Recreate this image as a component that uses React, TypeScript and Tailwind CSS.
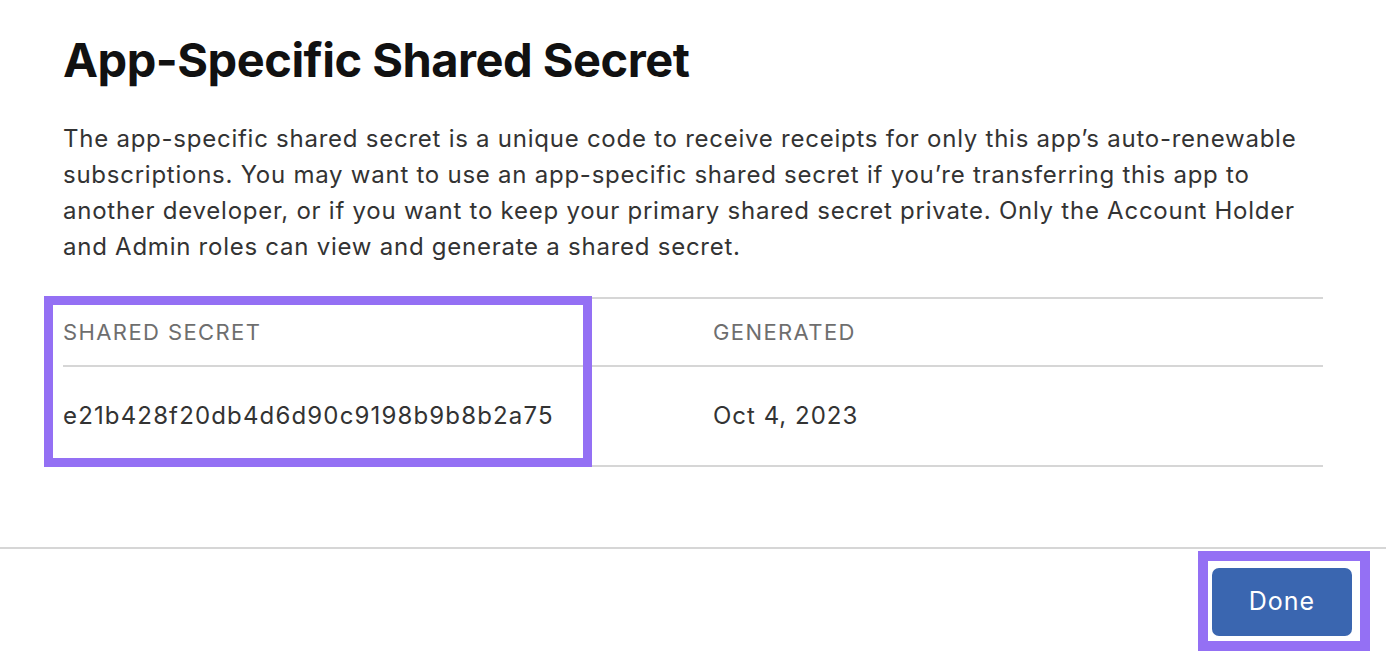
import React from 'react';

const rows = [{ secret: 'e21b428f20db4d6d90c9198b9b8b2a75', generated: 'Oct 4, 2023' }];

const App: React.FC = () => {
  return (
    <div className="relative w-[1386px] h-[654px] overflow-hidden bg-white font-['Inter',sans-serif]">
      {/* Body */}
      <div className="px-[63px] pt-[28px] h-[547px]">
        <h1 className="text-[47px] leading-[64px] font-bold text-[#111111] tracking-[-0.5px]">
          App-Specific Shared Secret
        </h1>
        <p className="mt-[29px] text-[24px] leading-[36px] tracking-[0.75px] text-[#333333]">
          The app-specific shared secret is a unique code to receive receipts for only this app’s auto-renewable
          subscriptions. You may want to use an app-specific shared secret if you’re transferring this app to
          another developer, or if you want to keep your primary shared secret private. Only the Account Holder
          and Admin roles can view and generate a shared secret.
        </p>

        <div className="mt-[32px] border-t-2 border-[#d6d6d6]">
          <div className="grid grid-cols-[650px_1fr] h-[68px] items-center border-b-2 border-[#d6d6d6]">
            <span className="text-[22px] tracking-[1.4px] text-[#6e6e6e]">SHARED SECRET</span>
            <span className="text-[22px] tracking-[1.4px] text-[#6e6e6e]">GENERATED</span>
          </div>
          {rows.map((r) => (
            <div
              key={r.secret}
              className="grid grid-cols-[650px_1fr] h-[100px] items-center border-b-2 border-[#d6d6d6]"
            >
              <span className="text-[24px] tracking-[1.15px] text-[#333333]">{r.secret}</span>
              <span className="text-[24px] tracking-[1px] text-[#333333]">{r.generated}</span>
            </div>
          ))}
        </div>
      </div>

      {/* Footer */}
      <div className="border-t-2 border-[#d6d6d6] h-[107px] flex items-start justify-end pr-[34px] pt-[19px]">
        <button className="w-[140px] h-[68px] rounded-[7px] bg-[#3a66b0] text-white text-[25px] tracking-[1px]">
          Done
        </button>
      </div>

      {/* Highlight annotations */}
      <div className="absolute left-[44px] top-[296px] w-[548px] h-[171px] border-[9px] border-[#9470f4]" />
      <div className="absolute left-[1198px] top-[551px] w-[172px] h-[100px] border-[10px] border-[#9470f4]" />
    </div>
  );
};

export default App;
